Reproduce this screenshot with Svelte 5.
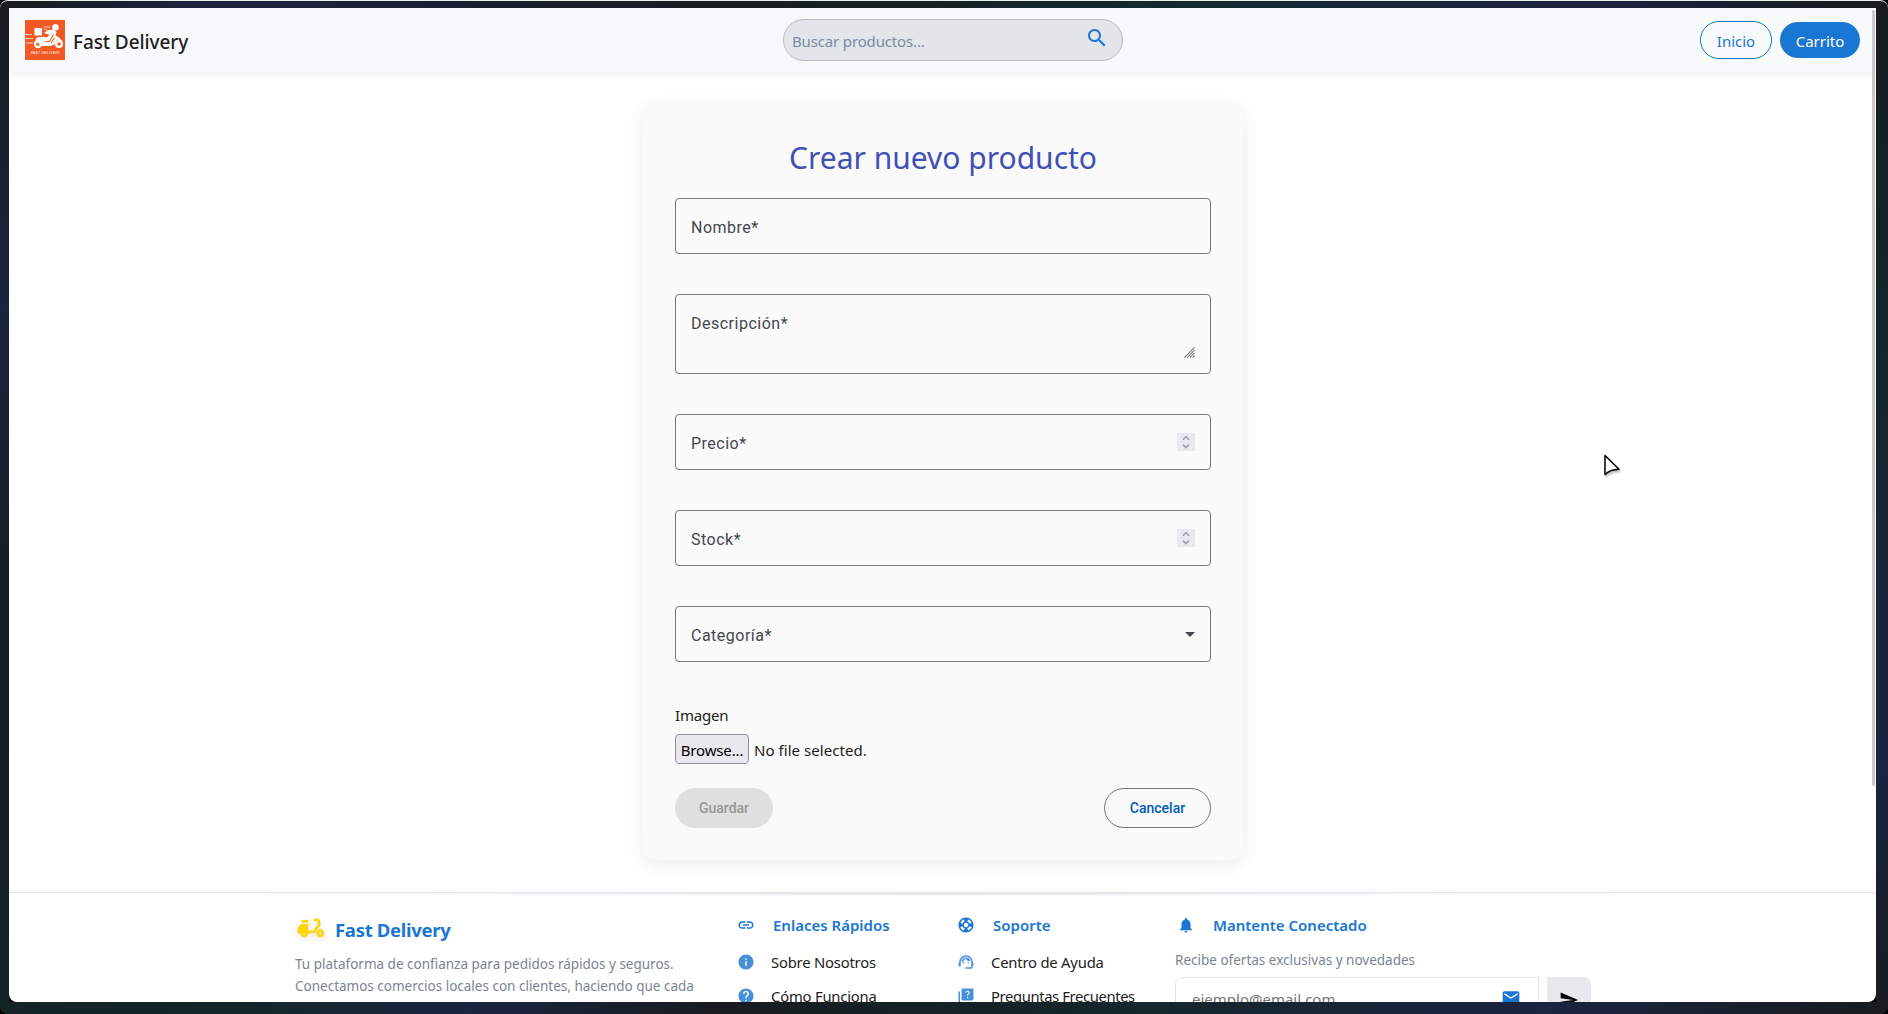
<script>
  const icons = {
    search: 'M15.5 14h-.79l-.28-.27C15.41 12.59 16 11.11 16 9.5 16 5.91 13.09 3 9.5 3S3 5.91 3 9.5 5.91 16 9.5 16c1.61 0 3.09-.59 4.23-1.57l.27.28v.79l5 4.99L20.49 19l-4.99-5zm-6 0C7.01 14 5 11.99 5 9.5S7.01 5 9.5 5 14 7.01 14 9.5 11.99 14 9.5 14z',
    moped: 'M19 7c0-1.1-.9-2-2-2h-3v2h3v2.65L13.52 14H10V9H6c-2.21 0-4 1.79-4 4v3h2c0 1.66 1.34 3 3 3s3-1.34 3-3h4.48L19 10.35V7zM7 17c-.55 0-1-.45-1-1h2c0 .55-.45 1-1 1zM5 6h5v2H5zM19 13c-1.66 0-3 1.34-3 3s1.34 3 3 3 3-1.34 3-3-1.34-3-3-3zm0 4c-.55 0-1-.45-1-1s.45-1 1-1 1 .45 1 1-.45 1-1 1z',
    link: 'M3.9 12c0-1.71 1.39-3.1 3.1-3.1h4V7H7c-2.76 0-5 2.24-5 5s2.24 5 5 5h4v-1.9H7c-1.71 0-3.1-1.39-3.1-3.1zM8 13h8v-2H8v2zm9-6h-4v1.9h4c1.71 0 3.1 1.39 3.1 3.1s-1.39 3.1-3.1 3.1h-4V17h4c2.76 0 5-2.24 5-5s-2.24-5-5-5z',
    support: 'M12 2C6.48 2 2 6.48 2 12s4.48 10 10 10 10-4.48 10-10S17.52 2 12 2zm7.46 7.12l-2.78 1.15c-.51-1.36-1.58-2.44-2.95-2.94l1.15-2.78c2.1.8 3.77 2.47 4.58 4.57zM12 15c-1.66 0-3-1.34-3-3s1.34-3 3-3 3 1.34 3 3-1.34 3-3 3zM9.13 4.54l1.17 2.78c-1.38.5-2.47 1.59-2.98 2.97L4.54 9.13c.81-2.11 2.48-3.78 4.59-4.59zM4.54 14.87l2.78-1.15c.51 1.38 1.59 2.46 2.97 2.96l-1.17 2.78c-2.1-.81-3.77-2.48-4.58-4.59zm10.34 4.59l-1.15-2.78c1.37-.51 2.45-1.59 2.95-2.97l2.78 1.17c-.81 2.1-2.48 3.77-4.58 4.58z',
    bell: 'M12 22c1.1 0 2-.9 2-2h-4c0 1.1.89 2 2 2zm6-6v-5c0-3.07-1.64-5.64-4.5-6.32V4c0-.83-.67-1.5-1.5-1.5s-1.5.67-1.5 1.5v.68C7.63 5.36 6 7.92 6 11v5l-2 2v1h16v-1l-2-2z',
    info: 'M12 2C6.48 2 2 6.48 2 12s4.48 10 10 10 10-4.48 10-10S17.52 2 12 2zm1 15h-2v-6h2v6zm0-8h-2V7h2v2z',
    help: 'M12 2C6.48 2 2 6.48 2 12s4.48 10 10 10 10-4.48 10-10S17.52 2 12 2zm1 17h-2v-2h2v2zm2.07-7.75l-.9.92C13.45 12.9 13 13.5 13 15h-2v-.5c0-1.1.45-2.1 1.17-2.83l1.24-1.26c.37-.36.59-.86.59-1.41 0-1.1-.9-2-2-2s-2 .9-2 2H8c0-2.21 1.79-4 4-4s4 1.79 4 4c0 .88-.36 1.68-.93 2.25z',
    agent: 'M21 12.22C21 6.73 16.74 3 12 3c-4.69 0-9 3.65-9 9.28-.6.34-1 .98-1 1.72v2c0 1.1.9 2 2 2h1v-6.1c0-3.87 3.13-7 7-7s7 3.13 7 7V19h-8v2h8c1.1 0 2-.9 2-2v-1.22c.59-.31 1-.92 1-1.64v-2.3c0-.7-.41-1.31-1-1.62zM8 13a1 1 0 1 0 2 0a1 1 0 1 0-2 0zM14 13a1 1 0 1 0 2 0a1 1 0 1 0-2 0zM18 11.03C17.52 8.18 15.04 6 12.05 6c-3.03 0-6.29 2.51-6.03 6.45 2.47-1.01 4.33-3.21 4.86-5.89 1.31 2.63 4 4.44 7.12 4.47z',
    quiz: 'M4 6H2v14c0 1.1.9 2 2 2h14v-2H4V6zm16-4H8c-1.1 0-2 .9-2 2v12c0 1.1.9 2 2 2h12c1.1 0 2-.9 2-2V4c0-1.1-.9-2-2-2zm-5.99 13c-.59 0-1.05-.47-1.05-1.05 0-.59.47-1.04 1.05-1.04.59 0 1.04.45 1.04 1.04-.01.58-.45 1.05-1.04 1.05zm2.5-6.17c-.63.93-1.23 1.21-1.56 1.81-.13.24-.18.4-.18 1.18h-1.52c0-.41-.06-1.08.26-1.65.41-.73 1.18-1.16 1.63-1.8.48-.68.21-1.94-1.14-1.94-.88 0-1.32.67-1.5 1.23l-1.37-.57C11.51 5.96 12.52 5 13.99 5c1.23 0 2.08.56 2.51 1.26.37.61.58 1.73.01 2.57z',
    mail: 'M20 4H4c-1.1 0-1.99.9-1.99 2L2 18c0 1.1.9 2 2 2h16c1.1 0 2-.9 2-2V6c0-1.1-.9-2-2-2zm0 4l-8 5-8-5V6l8 5 8-5v2z',
    send: 'M2.01 21L23 12 2.01 3 2 10l15 2-15 2z'
  };
</script>

{#snippet icon(name, cls)}
  <svg class={cls} viewBox="0 0 24 24" fill="currentColor" aria-hidden="true"><path d={icons[name]} /></svg>
{/snippet}

{#snippet stepper()}
  <svg class="stepper" viewBox="0 0 18 18" aria-hidden="true">
    <path d="M6 6.8 9 3.8 12 6.8M6 11.6 9 14.6 12 11.6" fill="none" stroke="#9a9aa6" stroke-width="1.5" />
  </svg>
{/snippet}

<div class="backdrop">
  <div class="frame">
    <div class="page">
      <header class="nav">
        <div class="brand">
          <svg class="logo" viewBox="0 0 40 40" aria-hidden="true">
            <rect width="40" height="40" fill="#f15a24" />
            <g fill="#fff">
              <path d="M9.500 8h7.500v7.500h-7.500z" />
              <circle cx="30.500" cy="7.200" r="3.200" />
              <path d="M19 13 23 10 28.500 9.500 31.500 12 30.500 15.500 34 17.500 37.500 21.500 35.500 22.500 32 19.500 30.500 24 26 26 16.500 26 12 22 10.500 19.500 12 17.500 18 16.800 22 17.500 24.500 14.500 22 14z" />
            </g>
            <g fill="none" stroke="#fff">
              <circle cx="13" cy="24" r="3" stroke-width="2.300" />
              <circle cx="34" cy="24" r="2.900" stroke-width="2.200" />
              <path d="M0 14.500h7M0 18.500h8M1 23h7M18.500 7h7M19 9.500h3" stroke-width=".7" />
            </g>
            <path d="M19.500 21.500 24.500 21.500 28.500 14.500M26 23 29.500 18" fill="none" stroke="#f15a24" stroke-width="1.100" />
            <text class="logo-text" x="6" y="33.500" textLength="29">FAST DELIVERY</text>
          </svg>
          <span class="brand-name">Fast Delivery</span>
        </div>
        <div class="search">
          <span class="search-hint">Buscar productos...</span>
          {@render icon('search', 'search-icon')}
        </div>
        <nav class="actions">
          <a class="pill outline" href="#inicio">Inicio</a>
          <a class="pill solid" href="#carrito">Carrito</a>
        </nav>
      </header>

      <main>
        <section class="card">
          <h1>Crear nuevo producto</h1>
          <div class="fields">
            <div class="field"><span class="label">Nombre*</span></div>
            <div class="field area">
              <span class="label">Descripción*</span>
              <svg class="grip" viewBox="0 0 12 12" aria-hidden="true">
                <path d="M.5 11.5 11.5.5M3.5 11.5l8-8M6.5 11.5l5-5M9.5 11.5l2-2" stroke="#777" stroke-width="1.1" fill="none" />
              </svg>
            </div>
            <div class="field"><span class="label">Precio*</span>{@render stepper()}</div>
            <div class="field"><span class="label">Stock*</span>{@render stepper()}</div>
            <div class="field">
              <span class="label">Categoría*</span>
              <svg class="caret" viewBox="0 0 10 5" aria-hidden="true"><path d="M0 0h10L5 5z" fill="#44474e" /></svg>
            </div>
          </div>
          <div class="file">
            <span class="file-label">Imagen</span>
            <div class="file-row">
              <button class="browse" type="button">Browse...</button>
              <span class="file-status">No file selected.</span>
            </div>
          </div>
          <div class="buttons">
            <button class="save" type="button">Guardar</button>
            <button class="cancel" type="button">Cancelar</button>
          </div>
        </section>
      </main>

      <footer>
        <div class="glow"></div>
        <div class="columns">
          <section class="about">
            <h2>{@render icon('moped', 'moped')}<span>Fast Delivery</span></h2>
            <p>Tu plataforma de confianza para pedidos rápidos y seguros.<br />Conectamos comercios locales con clientes, haciendo que cada</p>
          </section>
          <section>
            <h3>{@render icon('link', 'small')}<span>Enlaces Rápidos</span></h3>
            <ul>
              <li>{@render icon('info', 'small soft')}<span>Sobre Nosotros</span></li>
              <li>{@render icon('help', 'small soft')}<span>Cómo Funciona</span></li>
            </ul>
          </section>
          <section>
            <h3>{@render icon('support', 'small')}<span>Soporte</span></h3>
            <ul>
              <li>{@render icon('agent', 'small soft')}<span>Centro de Ayuda</span></li>
              <li>{@render icon('quiz', 'small soft')}<span class="faq">Preguntas Frecuentes</span></li>
            </ul>
          </section>
          <section class="news">
            <h3>{@render icon('bell', 'small')}<span>Mantente Conectado</span></h3>
            <p class="offer">Recibe ofertas exclusivas y novedades</p>
            <div class="subscribe">
              <div class="email"><span>ejemplo@email.com</span>{@render icon('mail', 'mail')}</div>
              <button class="send" type="button" aria-label="Enviar">{@render icon('send', 'send-icon')}</button>
            </div>
          </section>
        </div>
      </footer>
      <div class="scrollbar"></div>
      <svg class="cursor" viewBox="0 0 18 24" aria-hidden="true">
        <path d="M2 1.5 16 15.2C10.500 15.300 6 16.200 2 20.500z" fill="#fff" stroke="#000" stroke-width="1.500" stroke-linejoin="round" />
      </svg>
    </div>
  </div>
</div>

<style>
  :global(body) { margin: 0; }
  * { box-sizing: border-box; }

  .backdrop {
    width: 1888px;
    height: 1014px;
    overflow: hidden;
    background: #000;
    font-family: "Noto Sans", "Open Sans", sans-serif;
    color: #212121;
  }
  .frame {
    height: 1014px;
    padding: 7px 12px 12px 9px;
    border-top: 1px solid #e8f0ee;
    border-radius: 8px;
    background:
      linear-gradient(90deg, #181c1e, #1b2440 11%, #1a1d22 38%, #14282b 58%, #1b2440 84%, #181c1e) top / 100% 8px no-repeat,
      linear-gradient(90deg, #142426, #142629 13%, #1b2440 25%, #181c20 38%, #14262a 58%, #1b2440 82%, #181c1e) bottom / 100% 12px no-repeat,
      linear-gradient(180deg, #181c1e, #1b2440 30%, #181c20 60%, #142426) left / 9px 100% no-repeat,
      linear-gradient(180deg, #181c1e, #14262a 30%, #1b2440 76%, #181c1e) right / 12px 100% no-repeat;
  }
  .page {
    position: relative;
    height: 994px;
    overflow: hidden;
    border-radius: 0 0 8px 8px;
    background: #fff;
  }

  .nav {
    display: flex;
    justify-content: space-between;
    align-items: center;
    height: 64px;
    padding: 0 16px;
    background: #f8f9fb;
    box-shadow: 0 2px 8px rgba(0, 0, 0, .08);
  }
  .brand { display: flex; align-items: center; gap: 8px; width: 400px; }
  .logo { width: 40px; height: 40px; }
  .logo-text { font: italic 400 3.4px "Liberation Sans", sans-serif; fill: #fff; }
  .brand-name { font-size: 19px; font-weight: 500; line-height: 28px; padding-top: 4px; letter-spacing: -.1px; }
  .search {
    display: flex;
    justify-content: space-between;
    align-items: center;
    width: 340px;
    height: 42px;
    margin: 0 157px 0 178px;
    padding: 0 13px 0 8px;
    border: 1px solid #b4bcc6;
    border-radius: 21px;
    background: #e2e6eb;
  }
  .search-hint { color: #7b8aa0; font-size: 15px; padding-top: 2px; letter-spacing: -.15px; }
  .search-icon { width: 24px; height: 24px; color: #1976d2; margin-bottom: 4px; }
  .actions { display: flex; align-items: center; justify-content: flex-end; gap: 8px; width: 400px; }
  .pill {
    display: flex;
    justify-content: center;
    align-items: center;
    border-radius: 20px;
    font-size: 15px;
    padding-top: 2px;
    text-decoration: none;
  }
  .outline { width: 72px; height: 38px; border: 1px solid #1976d2; color: #1976d2; }
  .solid { width: 80px; height: 36px; background: #1976d2; color: #fff; }

  main { display: flex; justify-content: center; padding: 32px 0 32px 1px; }
  .card {
    width: 600px;
    height: 756px;
    padding: 32px;
    border-radius: 12px;
    background: #fafafa;
    box-shadow: 0 4px 20px rgba(0, 0, 0, .08);
  }
  h1 { margin: 0; padding-top: 1px; height: 62px; font-size: 30px; line-height: 42px; font-weight: 400; text-align: center; color: #3f51b5; }
  .fields { display: flex; flex-direction: column; gap: 40px; }
  .field {
    display: flex;
    justify-content: space-between;
    align-items: center;
    height: 56px;
    padding: 0 15px;
    border: 1px solid #74777f;
    border-radius: 4px;
  }
  .area { height: 80px; align-items: flex-start; padding-top: 16px; }
  .label { font: 16px/24px Roboto, sans-serif; letter-spacing: .5px; color: #44474e; padding-top: 4px; }
  .area .label { padding-top: 1px; }
  .grip { width: 11px; height: 11px; margin-top: 36px; }
  .stepper { width: 18px; height: 18px; background: #e9e9ed; }
  .caret { width: 10px; height: 5px; }
  .file { margin-top: 41px; }
  .file-label { display: block; height: 31px; font-size: 15px; line-height: 24px; letter-spacing: -.2px; }
  .file-row { display: flex; align-items: center; gap: 5px; height: 30px; }
  .browse {
    width: 74px;
    height: 30px;
    padding: 0;
    border: 1px solid #8f8f9d;
    border-radius: 4px;
    background: #e9e9ed;
    color: #000;
    font: 15px/30px "Noto Sans", sans-serif;
    letter-spacing: -.15px;
  }
  .file-status { font-size: 15px; padding-top: 2px; letter-spacing: .05px; }
  .buttons { display: flex; justify-content: space-between; margin-top: 24px; }
  .save, .cancel { height: 40px; padding: 0; border-radius: 20px; font: 500 14px/20px Roboto, sans-serif; }
  .save { width: 98px; border: 0; background: #dfdfdf; color: #969696; }
  .cancel { width: 107px; border: 1px solid #74777f; background: transparent; color: #005cbb; }

  footer { border-top: 1px solid #e2e5ea; }
  .glow { height: 2px; background: linear-gradient(90deg, transparent 10%, #e2e6ec 50%, transparent 90%); }
  .columns { display: flex; padding-left: 286px; }
  .columns section { width: 220px; padding-top: 19px; }
  .columns .about { width: 442px; padding-top: 17px; }
  h2 { display: flex; align-items: center; gap: 8px; height: 32px; margin: 0 0 9px; font-size: 18.5px; line-height: 32px; font-weight: 700; letter-spacing: -.3px; color: #1976d2; }
  h2 span { padding-top: 4px; }
  .moped { width: 32px; height: 32px; color: #ffd600; filter: drop-shadow(0 2px 3px rgba(0, 0, 0, .12)); }
  p { margin: 0; font-size: 13.5px; line-height: 22px; color: #7b8494; }
  h3 { display: flex; align-items: center; gap: 18px; height: 22px; margin: 0; font-size: 15px; font-weight: 600; color: #1976d2; }
  .small { flex: none; width: 18px; height: 18px; }
  .soft { color: #1976d2; opacity: .8; }
  ul { list-style: none; margin: 0; padding: 9px 0 0; }
  li { display: flex; align-items: center; gap: 16px; height: 34px; font-size: 14.8px; letter-spacing: -.2px; }
  .faq { letter-spacing: -.38px; }
  .columns .news { width: 440px; }
  .offer { margin: 13px 0 0 -2px; }
  .subscribe { display: flex; gap: 8px; margin: 6px 0 0 -2px; }
  .email {
    display: flex;
    justify-content: space-between;
    width: 364px;
    height: 48px;
    padding: 11px 17px 0 16px;
    border: 1px solid #e2e5ea;
    border-radius: 8px 0 0 8px;
    color: #757575;
    font-size: 15px;
  }
  .mail { width: 20px; height: 20px; margin-top: -1px; color: #1976d2; }
  .send { width: 44px; height: 48px; padding: 0; border: 0; border-radius: 0 8px 8px 0; background: #e9e9ed; color: #000; }
  .send-icon { width: 20px; height: 20px; }

  .scrollbar { position: absolute; top: 2px; left: 1863px; width: 3px; height: 776px; border-radius: 2px; background: #c9c9c9; }
  .cursor { position: absolute; left: 1594px; top: 446px; width: 18px; height: 24px; filter: drop-shadow(1px 2px 1px rgba(0, 0, 0, .3)); }
</style>
